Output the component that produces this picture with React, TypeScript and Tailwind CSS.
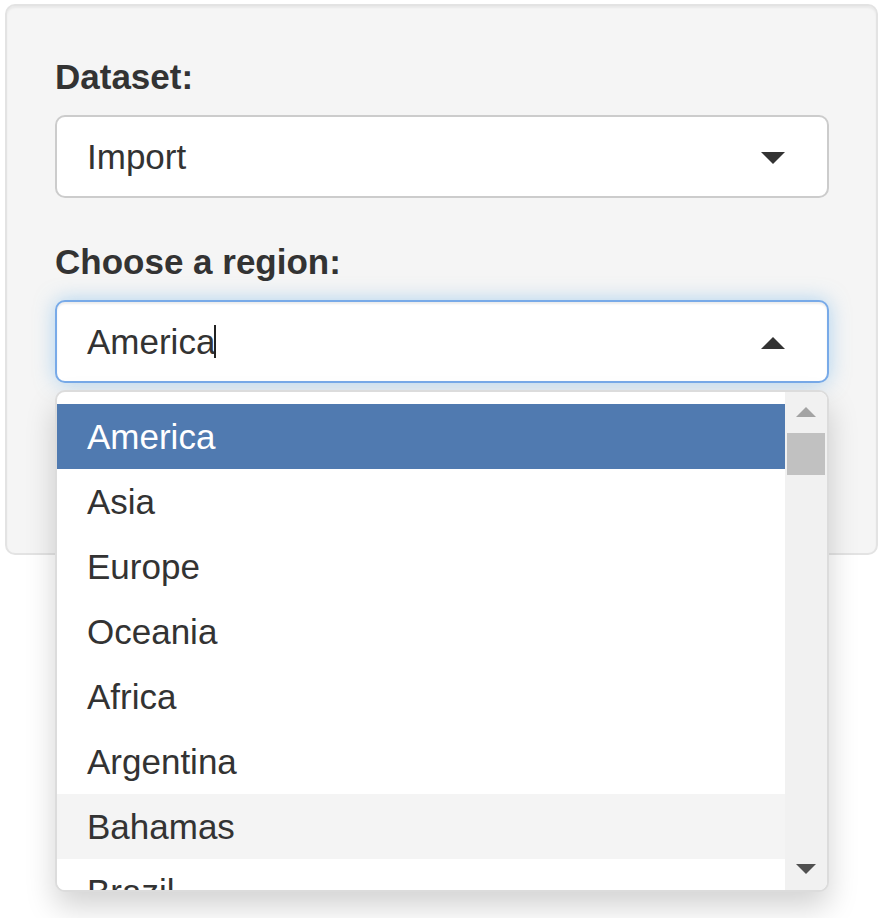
import React from "react";

const options = ["America", "Asia", "Europe", "Oceania", "Africa", "Argentina", "Bahamas", "Brazil"];

export default function App() {
  return (
    <div
      className="w-[887px] h-[918px] bg-white pt-[4px] pl-[5px]"
      style={{ fontFamily: '"Liberation Sans", Arial, Helvetica, sans-serif' }}
    >
      <div className="w-[873px] h-[551px] box-border border-2 border-[#e3e3e3] rounded-[10px] bg-[#f5f5f5] pt-[46px] pl-[48px] pr-[47px] shadow-[inset_0_2px_2px_rgba(0,0,0,0.05)] text-[#333]">
        <div className="mb-[39px]">
          <div className="font-bold text-[35px] leading-[50px] mb-[13px]">Dataset:</div>
          <div className="h-[83px] box-border border-2 border-[#cccccc] rounded-[10px] bg-white pl-[30px] pr-[42px] flex items-center justify-between">
            <span className="text-[35px] leading-[50px]">Import</span>
            <span className="w-0 h-0 border-l-[12px] border-r-[12px] border-t-[12.5px] border-l-transparent border-r-transparent border-t-[#333] mt-[2px]" />
          </div>
        </div>
        <div>
          <div className="font-bold text-[35px] leading-[50px] mb-[13px]">Choose a region:</div>
          <div className="relative">
            <div className="h-[83px] box-border border-2 border-[#78aae8] rounded-[10px] bg-white pl-[30px] pr-[42px] flex items-center justify-between shadow-[inset_0_2px_2px_rgba(0,0,0,0.075),0_0_20px_rgba(102,175,233,0.5)]">
              <div className="flex items-center">
                <span className="text-[35px] leading-[50px]">America</span>
                <span className="inline-block w-[2px] h-[33px] bg-[#222] -ml-[1px]" />
              </div>
              <span className="w-0 h-0 border-l-[12px] border-r-[12px] border-b-[12.5px] border-l-transparent border-r-transparent border-b-[#333] mt-[2px]" />
            </div>
            <div className="absolute left-0 top-[90px] w-[774px] h-[502px] box-border border-2 border-[#dcdcdc] rounded-[10px] bg-white overflow-hidden shadow-[0_15px_30px_rgba(0,0,0,0.175)] flex z-10">
              <div className="flex-1 overflow-hidden pt-[12px]">
                {options.map((o, i) => (
                  <div
                    key={o}
                    className={
                      "h-[65px] flex items-center pl-[30px] text-[35px] leading-[50px] " +
                      (i === 0 ? "bg-[#507ab0] text-white" : i === 6 ? "bg-[#f4f4f4] text-[#333]" : "bg-white text-[#333]")
                    }
                  >
                    {o}
                  </div>
                ))}
              </div>
              <div className="w-[42px] h-full bg-[#f1f1f1] flex flex-col items-center">
                <span className="mt-[15px] w-0 h-0 border-l-[10px] border-r-[10px] border-b-[10px] border-l-transparent border-r-transparent border-b-[#a3a3a3]" />
                <div className="mt-[16px] w-[38px] h-[42px] bg-[#c1c1c1]" />
                <div className="flex-1" />
                <span className="mb-[16px] w-0 h-0 border-l-[10px] border-r-[10px] border-t-[10px] border-l-transparent border-r-transparent border-t-[#505050]" />
              </div>
            </div>
          </div>
        </div>
      </div>
    </div>
  );
}
